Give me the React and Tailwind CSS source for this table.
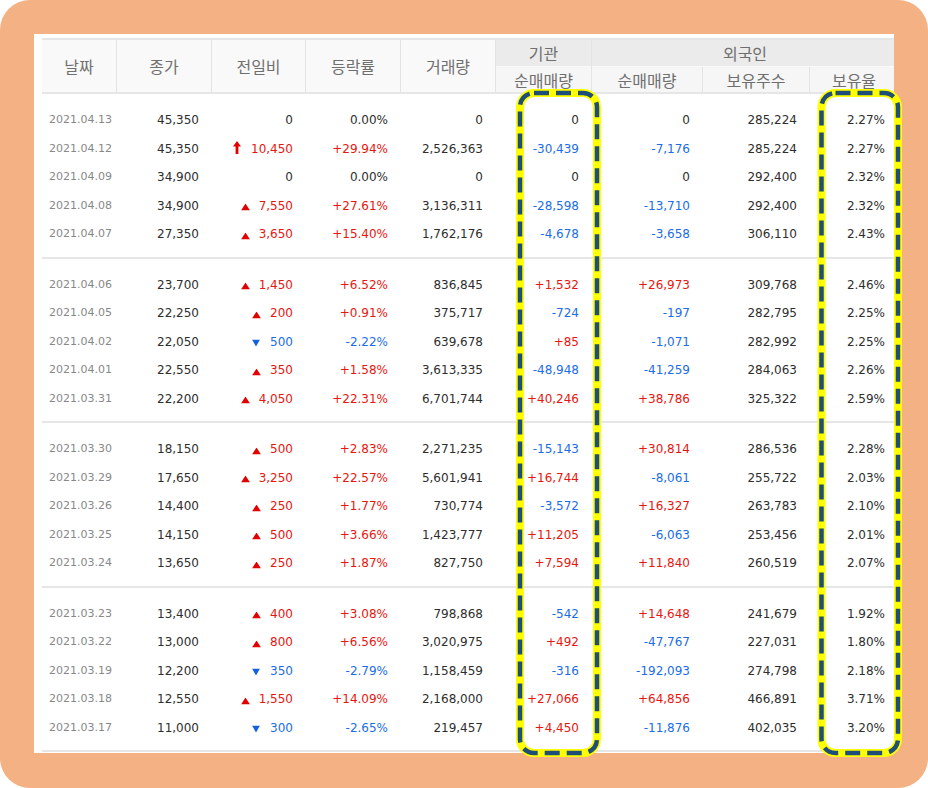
import React from "react";

const groups = [
  [
    ["2021.04.13", "45,350", "", "0", "0.00%", "0", "0", "0", "285,224", "2.27%"],
    ["2021.04.12", "45,350", "limit", "10,450", "+29.94%", "2,526,363", "-30,439", "-7,176", "285,224", "2.27%"],
    ["2021.04.09", "34,900", "", "0", "0.00%", "0", "0", "0", "292,400", "2.32%"],
    ["2021.04.08", "34,900", "up", "7,550", "+27.61%", "3,136,311", "-28,598", "-13,710", "292,400", "2.32%"],
    ["2021.04.07", "27,350", "up", "3,650", "+15.40%", "1,762,176", "-4,678", "-3,658", "306,110", "2.43%"],
  ],
  [
    ["2021.04.06", "23,700", "up", "1,450", "+6.52%", "836,845", "+1,532", "+26,973", "309,768", "2.46%"],
    ["2021.04.05", "22,250", "up", "200", "+0.91%", "375,717", "-724", "-197", "282,795", "2.25%"],
    ["2021.04.02", "22,050", "down", "500", "-2.22%", "639,678", "+85", "-1,071", "282,992", "2.25%"],
    ["2021.04.01", "22,550", "up", "350", "+1.58%", "3,613,335", "-48,948", "-41,259", "284,063", "2.26%"],
    ["2021.03.31", "22,200", "up", "4,050", "+22.31%", "6,701,744", "+40,246", "+38,786", "325,322", "2.59%"],
  ],
  [
    ["2021.03.30", "18,150", "up", "500", "+2.83%", "2,271,235", "-15,143", "+30,814", "286,536", "2.28%"],
    ["2021.03.29", "17,650", "up", "3,250", "+22.57%", "5,601,941", "+16,744", "-8,061", "255,722", "2.03%"],
    ["2021.03.26", "14,400", "up", "250", "+1.77%", "730,774", "-3,572", "+16,327", "263,783", "2.10%"],
    ["2021.03.25", "14,150", "up", "500", "+3.66%", "1,423,777", "+11,205", "-6,063", "253,456", "2.01%"],
    ["2021.03.24", "13,650", "up", "250", "+1.87%", "827,750", "+7,594", "+11,840", "260,519", "2.07%"],
  ],
  [
    ["2021.03.23", "13,400", "up", "400", "+3.08%", "798,868", "-542", "+14,648", "241,679", "1.92%"],
    ["2021.03.22", "13,000", "up", "800", "+6.56%", "3,020,975", "+492", "-47,767", "227,031", "1.80%"],
    ["2021.03.19", "12,200", "down", "350", "-2.79%", "1,158,459", "-316", "-192,093", "274,798", "2.18%"],
    ["2021.03.18", "12,550", "up", "1,550", "+14.09%", "2,168,000", "+27,066", "+64,856", "466,891", "3.71%"],
    ["2021.03.17", "11,000", "down", "300", "-2.65%", "219,457", "+4,450", "-11,876", "402,035", "3.20%"],
  ],
];

const RED = "text-[#e8160f]";
const BLUE = "text-[#1c6de6]";
const DARK = "text-[#2e2e2e]";

function signColor(v) {
  if (v.startsWith("+")) return RED;
  if (v.startsWith("-")) return BLUE;
  return DARK;
}

function Cell({ w, children, className = "" }) {
  return (
    <div className={`${w} shrink-0 h-full flex items-center justify-end pr-[13px] pt-[4px] ${className}`}>
      {children}
    </div>
  );
}

function ChangeIcon({ kind }) {
  if (kind === "limit") {
    return (
      <svg width="8" height="13" viewBox="0 0 8 13" className="mr-[10px] -translate-y-[1px]">
        <path d="M4 0 L8 5.5 L5.4 5.5 L5.4 13 L2.6 13 L2.6 5.5 L0 5.5 Z" fill="#e00000" />
      </svg>
    );
  }
  if (kind === "up") {
    return (
      <svg width="9" height="7" viewBox="0 0 9 7" className="mr-[9px] translate-y-[1.5px]">
        <polygon points="4.5,0 9,7 0,7" fill="#e00000" />
      </svg>
    );
  }
  if (kind === "down") {
    return (
      <svg width="8" height="7" viewBox="0 0 8 7" className="mr-[10px] translate-y-[1.5px]">
        <polygon points="0,0 8,0 4,7" fill="#1560e0" />
      </svg>
    );
  }
  return null;
}

function Row({ r }) {
  const [date, close, kind, diff, rate, vol, inst, forN, hold, ratio] = r;
  const diffColor = kind === "up" || kind === "limit" ? RED : kind === "down" ? BLUE : DARK;
  return (
    <div className="flex h-[28.5px] text-[12px]">
      <div className="w-[75px] shrink-0 h-full flex items-center justify-center text-[11px] text-[#888888] pl-[2px] pt-[4px]">
        {date}
      </div>
      <Cell w="w-[95px]" className={DARK}>{close}</Cell>
      <Cell w="w-[94px]" className={diffColor}>
        <ChangeIcon kind={kind} />
        <span>{diff}</span>
      </Cell>
      <Cell w="w-[95px]" className={signColor(rate)}>{rate}</Cell>
      <Cell w="w-[95px]" className={DARK}>{vol}</Cell>
      <Cell w="w-[96px]" className={signColor(inst)}>{inst}</Cell>
      <Cell w="w-[111px]" className={signColor(forN)}>{forN}</Cell>
      <Cell w="w-[107px]" className={DARK}>{hold}</Cell>
      <Cell w="w-[88px]" className={DARK}>{ratio}</Cell>
    </div>
  );
}

function HeadCell({ w, children, last = false }) {
  return (
    <div
      className={`${w} shrink-0 h-[52px] bg-[#f9f9f9] flex items-center justify-center ${
        last ? "" : "border-r border-[#e4e4e4]"
      }`}
    >
      {children}
    </div>
  );
}

export default function App() {
  return (
    <div className="relative w-[928px] h-[788px] bg-white overflow-hidden">
      <div className="w-full h-full rounded-[30px] bg-[#f4b183] pt-[34px] pl-[34px] pr-[34px] pb-[35px]">
        <div className="w-full h-full bg-white overflow-hidden pl-[8px] pt-[4px]">
          <div
            className="w-[856px]"
            style={{ fontFamily: '"DejaVu Sans", Verdana, sans-serif' }}
          >
            {/* header */}
            <div
              className="flex border-t-2 border-b-2 border-[#e6e6e6] text-[16px] text-[#6f6f6f]"
              style={{ fontFamily: '"Noto Sans CJK KR", "Noto Sans", sans-serif' }}
            >
              <HeadCell w="w-[75px]">날짜</HeadCell>
              <HeadCell w="w-[95px]">종가</HeadCell>
              <HeadCell w="w-[94px]">전일비</HeadCell>
              <HeadCell w="w-[95px]">등락률</HeadCell>
              <HeadCell w="w-[95px]">거래량</HeadCell>
              <div className="w-[96px] shrink-0 flex flex-col border-r border-[#e4e4e4]">
                <div className="h-[26px] bg-[#ebebeb] flex items-center justify-center">기관</div>
                <div className="h-[26px] bg-[#f6f6f6] border-t border-[#f9f9f9] flex items-center justify-center">
                  순매매량
                </div>
              </div>
              <div className="w-[306px] shrink-0 flex flex-col">
                <div className="h-[26px] bg-[#ebebeb] flex items-center justify-center">외국인</div>
                <div className="h-[26px] flex border-t border-[#f9f9f9]">
                  <div className="w-[111px] shrink-0 bg-[#f6f6f6] border-r border-[#e4e4e4] flex items-center justify-center">
                    순매매량
                  </div>
                  <div className="w-[107px] shrink-0 bg-[#f6f6f6] border-r border-[#e4e4e4] flex items-center justify-center">
                    보유주수
                  </div>
                  <div className="w-[88px] shrink-0 bg-[#f6f6f6] flex items-center justify-center">
                    보유율
                  </div>
                </div>
              </div>
            </div>
            {/* body */}
            {groups.map((g, gi) => (
              <div key={gi} className="py-[10px] border-b-2 border-[#e6e6e6]">
                {g.map((r, ri) => (
                  <Row key={ri} r={r} />
                ))}
              </div>
            ))}
          </div>
        </div>
      </div>
      {/* highlight annotations */}
      <svg
        className="absolute left-0 top-0 pointer-events-none"
        width="928"
        height="788"
        viewBox="0 0 928 788"
      >
        <rect x="520" y="93" width="77" height="660" rx="14" fill="none" stroke="#ffff00" strokeWidth="8" />
        <rect
          x="520"
          y="93"
          width="77"
          height="660"
          rx="14"
          fill="none"
          stroke="#1f4e79"
          strokeWidth="4.5"
          strokeDasharray="15 7"
        />
        <rect x="821.5" y="93" width="76.5" height="660" rx="14" fill="none" stroke="#ffff00" strokeWidth="8" />
        <rect
          x="821.5"
          y="93"
          width="76.5"
          height="660"
          rx="14"
          fill="none"
          stroke="#1f4e79"
          strokeWidth="4.5"
          strokeDasharray="15 7"
        />
      </svg>
    </div>
  );
}
